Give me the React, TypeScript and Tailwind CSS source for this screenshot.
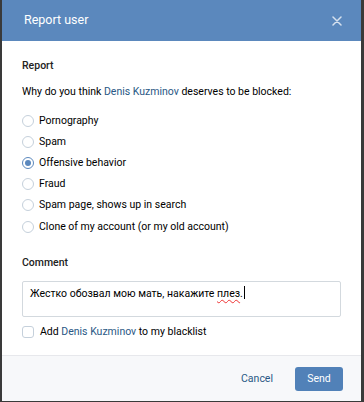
import React from "react";

const reasons = [
  "Pornography",
  "Spam",
  "Offensive behavior",
  "Fraud",
  "Spam page, shows up in search",
  "Clone of my account (or my old account)",
];

function Radio({ checked }: { checked: boolean }) {
  return (
    <span
      className={
        "flex h-[12px] w-[12px] shrink-0 items-center justify-center rounded-full border bg-white " +
        (checked ? "border-[#5b88bd]" : "border-[#c5d0db]")
      }
    >
      {checked && <span className="h-[6px] w-[6px] rounded-full bg-[#5b88bd]" />}
    </span>
  );
}

export default function App() {
  return (
    <div
      className="h-[402px] w-[364px] bg-[#3a3a3a] pl-[2px]"
      style={{ fontFamily: "Roboto, 'Open Sans', Arial, sans-serif" }}
    >
      <div className="flex h-[401px] w-[359px] flex-col bg-white">
        <div className="flex h-[41px] shrink-0 items-center justify-between bg-[#5b88bd] pl-[22px] pr-[19px]">
          <span className="text-[12.5px] text-white">Report user</span>
          <svg width="10" height="10" viewBox="0 0 10 10" className="opacity-75">
            <path d="M1 1 L9 9 M9 1 L1 9" stroke="white" strokeWidth="1.5" strokeLinecap="round" />
          </svg>
        </div>
        <div className="flex flex-1 flex-col px-[20px] pt-[17px] text-[10.5px] text-black">
          <div className="h-[16px] leading-[16px] font-medium text-[#222]">Report</div>
          <div className="mt-[10px] h-[16px] whitespace-nowrap leading-[16px] text-[#000]">
            Why do you think <span className="text-[#2a5885]">Denis Kuzminov</span> deserves to be blocked:
          </div>
          <div className="mt-[10px] flex flex-col">
            {reasons.map((r, i) => (
              <div key={r} className="flex h-[21.2px] items-center gap-[5px]">
                <Radio checked={i === 2} />
                <span className="leading-[16px]">{r}</span>
              </div>
            ))}
          </div>
          <div className="mt-[18px] h-[16px] leading-[16px] font-medium text-[#222]">Comment</div>
          <div className="mt-[10px] h-[36px] rounded-[2px] border border-[#d3d9de] px-[7px] pt-[2px] leading-[16px]">
            Жестко обозвал мою мать, накажите{" "}
            <span className="underline decoration-wavy decoration-[#e33] decoration-1 underline-offset-2">плез</span>
            .<span className="ml-[1px] inline-block h-[13px] w-[1px] translate-y-[2px] bg-black" />
          </div>
          <div className="mt-[7px] flex h-[16px] items-center gap-[6px]">
            <span className="h-[12px] w-[12px] rounded-[3px] border border-[#c5d0db] bg-white" />
            <span className="leading-[16px]">
              Add <span className="text-[#2a5885]">Denis Kuzminov</span> to my blacklist
            </span>
          </div>
        </div>
        <div className="flex h-[46px] shrink-0 items-center justify-end gap-[22px] border-t border-[#e7e8ec] bg-[#f7f8fa] pr-[18px] text-[10.5px]">
          <span className="text-[#2a5885]">Cancel</span>
          <span className="flex h-[24px] w-[48px] items-center justify-center rounded-[3px] bg-[#5181b8] text-white">
            Send
          </span>
        </div>
      </div>
    </div>
  );
}
